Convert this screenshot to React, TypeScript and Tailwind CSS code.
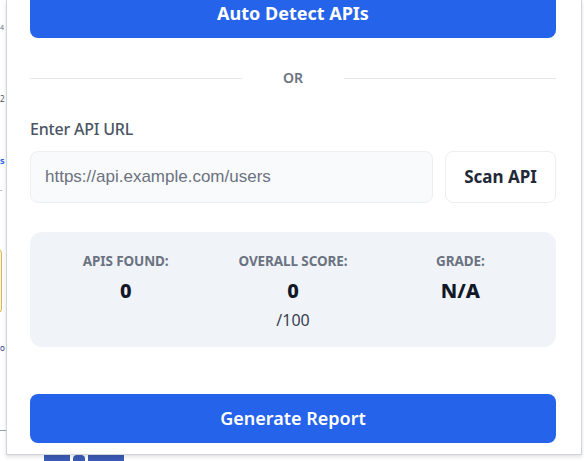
const font = { fontFamily: '"Noto Sans", "Open Sans", sans-serif' };

function StatBlock({ label, value, sub }: Readonly<{ label: string; value: string; sub?: string }>) {
  return (
    <div className="flex flex-col items-center">
      <span className="text-[13.5px] font-bold uppercase text-[#6b7280] leading-[16px] tracking-[-0.1px]">{label}</span>
      <span className="mt-[12px] text-[20px] font-extrabold text-[#111827] leading-[20px]">{value}</span>
      {sub && <span className="mt-[10px] text-[16px] text-[#374151] leading-[18px]">{sub}</span>}
    </div>
  );
}

export default function App() {
  return (
    <div className="relative w-[584px] h-[461px] overflow-hidden bg-white" style={font}>
      {/* ── page behind the popup ── */}
      <span className="absolute left-0 top-[24px] text-[7px] leading-[8px] text-gray-500">4</span>
      <span className="absolute left-0 top-[94px] text-[8px] leading-[10px] text-gray-600">2</span>
      <span className="absolute left-0 top-[155px] text-[9px] leading-[12px] font-bold text-[#2563eb]">s</span>
      <span className="absolute left-0 top-[186px] text-[7px] leading-[8px] text-gray-500">-</span>
      <div className="absolute left-[-10px] top-[249px] w-[12px] h-[64px] bg-[#fdf3d8] border border-[#d9b45a] rounded-sm" />
      <span className="absolute left-0 top-[343px] text-[8px] leading-[10px] text-[#1e3a8a]">o</span>
      <div className="absolute left-0 top-[430px] w-[6px] h-px bg-gray-400" />
      <div className="absolute left-[44px] top-[455px] w-[80px] h-[8px] flex gap-[3px]">
        <div className="w-[26px] bg-[#3b5bb5]" />
        <div className="w-[12px] bg-[#3b5bb5] rounded-t" />
        <div className="flex-1 bg-[#3b5bb5]" />
      </div>

      {/* ── popup ── */}
      <div className="absolute left-[6px] top-0 w-[576px] h-[455px] bg-white border-x border-b border-[#d1d5db] shadow-[0_2px_4px_rgba(0,0,0,0.12)] overflow-hidden">
        <div className="flex flex-col pl-[23px] pr-[25px] -mt-[11px]">
          <button className="h-[49px] w-full rounded-lg bg-[#2563eb] text-white text-[18px] font-bold">
            Auto Detect APIs
          </button>

          <div className="mt-[31px] flex items-center gap-[20px]">
            <div className="flex-1 h-px bg-[#e5e7eb]" />
            <span className="text-[14px] font-semibold text-[#6b7280] leading-[18px] px-[21px]">OR</span>
            <div className="flex-1 h-px bg-[#e5e7eb]" />
          </div>

          <label className="mt-[31px] text-[16px] font-medium text-[#4b5563] leading-[22px] tracking-[-0.2px]">Enter API URL</label>

          <div className="mt-[11px] flex gap-[12px]">
            <input
              className="flex-1 h-[52px] rounded-lg bg-[#f9fafb] border border-[#eceef1] px-[14px] text-[17px] placeholder:text-[#6b7280] outline-none"
              style={{ fontFamily: '"Liberation Sans", Arial, sans-serif' }}
              placeholder="https://api.example.com/users"
            />
            <button className="w-[111px] h-[52px] rounded-lg bg-white border border-[#eceef1] text-[17px] font-bold text-[#1f2937]">
              Scan API
            </button>
          </div>

          <div className="mt-[29px] h-[115px] rounded-xl bg-[#f0f4f9] px-5 pt-[21px] grid grid-cols-3 gap-4">
            <StatBlock label="APIs Found:" value="0" />
            <StatBlock label="Overall Score:" value="0" sub="/100" />
            <StatBlock label="Grade:" value="N/A" />
          </div>

          <button className="mt-[47px] h-[49px] w-full rounded-lg bg-[#2563eb] text-white text-[18px] font-semibold">
            Generate Report
          </button>
        </div>
      </div>
    </div>
  );
}
